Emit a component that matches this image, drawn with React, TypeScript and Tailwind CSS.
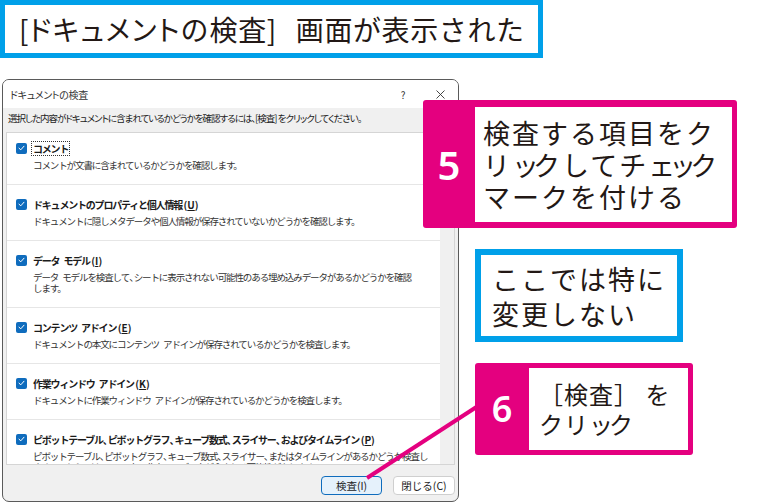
import React from 'react';

type Item = {
  label: string;
  accel?: string;
  desc: string[];
  focus?: boolean;
};

// Inspection items shown in the dialog list
const items: Item[] = [
  { label: 'コメント', desc: ['コメントが文書に含まれているかどうかを確認します。'], focus: true },
  {
    label: 'ドキュメントのプロパティと個人情報',
    accel: 'U',
    desc: ['ドキュメントに隠しメタデータや個人情報が保存されていないかどうかを確認します。'],
  },
  {
    label: 'データ モデル',
    accel: 'I',
    desc: ['データ モデルを検査して、シートに表示されない可能性のある埋め込みデータがあるかどうかを確認', 'します。'],
  },
  {
    label: 'コンテンツ アドイン',
    accel: 'E',
    desc: ['ドキュメントの本文にコンテンツ アドインが保存されているかどうかを検査します。'],
  },
  {
    label: '作業ウィンドウ アドイン',
    accel: 'K',
    desc: ['ドキュメントに作業ウィンドウ アドインが保存されているかどうかを検査します。'],
  },
  {
    label: 'ピボットテーブル、ピボットグラフ、キューブ数式、スライサー、およびタイムライン',
    accel: 'P',
    desc: [
      'ピボットテーブル、ピボットグラフ、キューブ数式、スライサー、またはタイムラインがあるかどうか検査し',
      'ます。これらには、シート上で非表示のデータが含まれる可能性があります。',
    ],
  },
];

// keep spaces visible and commas narrow under the tight tracking
function jp(text: string) {
  return text.split(/([ 、])/).map((seg, i) => {
    if (seg === ' ') return <span key={i} className="inline-block w-[4px]" />;
    if (seg === '、') return <span key={i} className="tracking-[-5px]">、</span>;
    return seg;
  });
}

function CheckBox() {
  return (
    <span className="flex h-[11px] w-[11px] shrink-0 items-center justify-center rounded-[2px] bg-[#0f6cbd]">
      <svg width="7" height="6" viewBox="0 0 7 6" fill="none">
        <path d="M1 3.2 L2.8 4.8 L6 1.2" stroke="white" strokeWidth="1" strokeLinecap="round" strokeLinejoin="round" />
      </svg>
    </span>
  );
}

function InspectRow({ item, first }: { item: Item; first: boolean }) {
  return (
    <div className={`border-b border-[#e6e6e6] pb-[13px] pl-[9px] ${first ? 'pt-[8px]' : 'pt-[12px]'}`}>
      <div className="flex h-[14px] items-center gap-[6px]">
        <CheckBox />
        <span
          className={`whitespace-nowrap text-[10px] leading-[13px] font-bold tracking-[-1.2px] text-[#1b1b1b] ${
            item.focus ? 'outline outline-1 outline-dotted outline-[#333] px-[1px] -ml-[1px]' : ''
          }`}
        >
          {jp(item.label)}
          {item.accel && (
            <span className="ml-[1.5px] tracking-normal">
              (<span className="underline underline-offset-[1px]">{item.accel}</span>)
            </span>
          )}
        </span>
      </div>
      <div className="mt-[5px] pl-[17px] text-[9.5px] leading-[11px] tracking-[-1.1px] text-[#333]">
        {item.desc.map((line, i) => (
          <div key={i} className="whitespace-nowrap">
            {jp(line)}
          </div>
        ))}
      </div>
    </div>
  );
}

function InspectorDialog() {
  return (
    <div className="ml-[2px] mt-[21px] flex h-[423px] w-[457px] flex-col overflow-hidden rounded-[7px] border border-[#5a5a5a] bg-[#f0f0f0] font-['Noto_Sans_CJK_JP',sans-serif]">
      {/* title bar */}
      <div className="flex h-[28px] shrink-0 items-center bg-white pl-[7px] pr-[13px]">
        <span className="text-[10px] tracking-[-0.3px] text-[#333] [font-feature-settings:'palt']">ドキュメントの検査</span>
        <span className="ml-auto mr-[28px] w-[10px] text-center text-[10px] text-[#333]">?</span>
        <svg width="9" height="9" viewBox="0 0 9 9">
          <path d="M0.5 0.5 L8.5 8.5 M8.5 0.5 L0.5 8.5" stroke="#333" strokeWidth="0.9" />
        </svg>
      </div>

      <div className="whitespace-nowrap pl-[5px] text-[9.5px] leading-[20px] tracking-[-1px] text-[#1b1b1b] [font-feature-settings:'palt']">
        選択した内容がドキュメントに含まれているかどうかを確認するには、[検査] をクリックしてください。
      </div>

      {/* list of inspections */}
      <div className="ml-[3px] mt-[4px] flex h-[333px] w-[449px] shrink-0 overflow-hidden border border-[#d5d5d5] bg-white">
        <div className="flex-1 overflow-hidden">
          {items.map((item, i) => (
            <InspectRow key={item.label} item={item} first={i === 0} />
          ))}
        </div>
        <div className="w-[14px] shrink-0 bg-[#f0f0f0]" />
      </div>

      <div className="mt-[11px] flex justify-end gap-[11px] pr-[3px] text-[10.5px] text-[#1b1b1b]">
        <button className="flex h-[19px] w-[61px] items-center justify-center rounded-[4px] border border-[#0f6cbd] bg-[#e5f1fb]">
          検査(I)
        </button>
        <button className="flex h-[19px] w-[62px] items-center justify-center rounded-[4px] border border-[#cfcfcf] bg-white">
          閉じる(C)
        </button>
      </div>
    </div>
  );
}

// small kana set a little tighter, as in the printed callouts
function Sm({ children, tight = 'tracking-[-6px]' }: { children: React.ReactNode; tight?: string }) {
  return <span className={tight}>{children}</span>;
}

export default function App() {
  return (
    <div className="relative h-[504px] w-[783px] overflow-hidden bg-white font-['Noto_Sans_CJK_JP',sans-serif] text-[#231815]">
      {/* heading caption */}
      <div className="flex h-[58px] w-[543px] items-center whitespace-nowrap border-[5px] border-[#00a0e9] pl-[14px] text-[28px] tracking-[0.6px]">
        [<span className="[font-feature-settings:'palt'] tracking-[1.5px]">ドキュメントの</span>検査]
        <span className="ml-[19px]">画面が表示された</span>
      </div>

      <InspectorDialog />

      {/* leader line from step 6 to the inspect button */}
      <svg className="pointer-events-none absolute left-0 top-0" width="783" height="504">
        <line x1="478" y1="406" x2="367" y2="478" stroke="#e4007f" strokeWidth="4" />
      </svg>

      {/* step 5 */}
      <div className="absolute left-[423px] top-[100px] flex h-[128px] w-[314px] rounded-[3px] bg-[#e4007f] pb-[6px] pr-[5px] pt-[7px]">
        <div className="flex w-[52px] items-center justify-center font-['Noto_Sans',sans-serif] text-[40px] font-semibold text-white">
          5
        </div>
        <div className="flex flex-1 items-center whitespace-nowrap bg-white pl-[8px] text-[27px] leading-[32px] tracking-[2px]">
          <div>
            検査する項目をク
            <br />
            リ<Sm>ッ</Sm>クしてチ<Sm>ェ</Sm><Sm>ッ</Sm>ク
            <br />
            マークを付ける
          </div>
        </div>
      </div>

      {/* note */}
      <div className="absolute left-[475px] top-[249px] flex h-[93px] w-[208px] items-center border-[6px] border-[#00a0e9] bg-white pl-[11px] text-[27px] leading-[35px] tracking-[2px]">
        <div>
          ここでは特に
          <br />
          変更しない
        </div>
      </div>

      {/* step 6 */}
      <div className="absolute left-[475px] top-[363px] flex h-[92px] w-[218px] rounded-[3px] bg-[#e4007f] py-[5px] pr-[5px]">
        <div className="flex w-[54px] items-center justify-center font-['Noto_Sans',sans-serif] text-[36px] font-semibold text-white">
          6
        </div>
        <div className="flex flex-1 items-center whitespace-nowrap bg-white pl-[10px] text-[24px] leading-[30px] tracking-[1px]">
          <div>
            ［検査］ を
            <br />
            クリ<Sm tight="tracking-[-4px]">ッ</Sm>ク
          </div>
        </div>
      </div>
    </div>
  );
}
